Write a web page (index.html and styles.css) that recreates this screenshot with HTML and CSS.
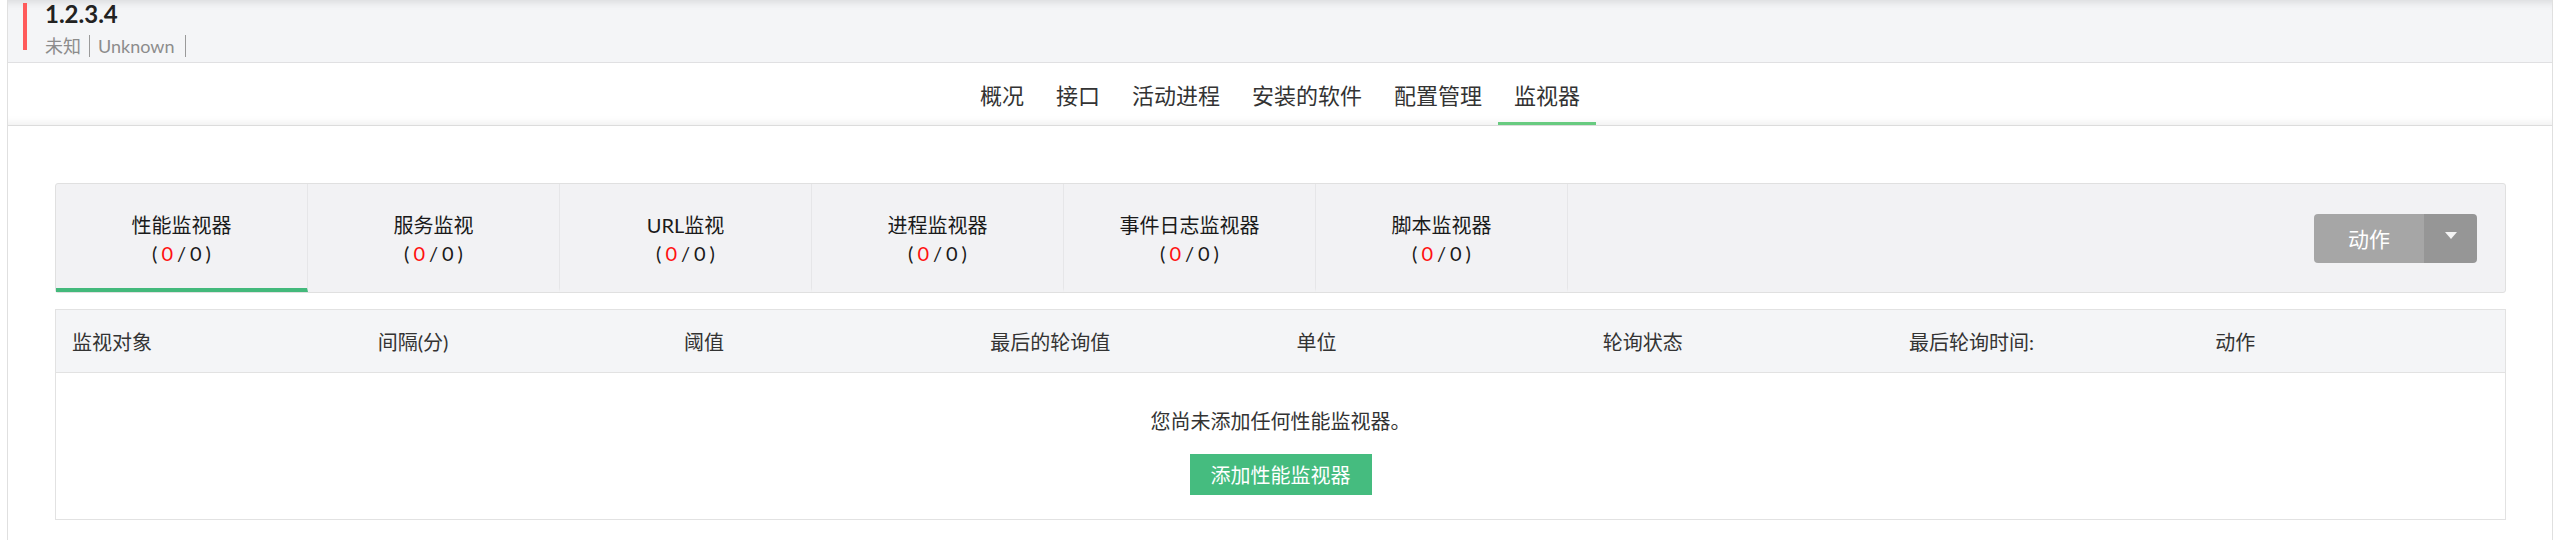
FILE: index.html
```html
<!DOCTYPE html>
<html lang="zh-CN">
<head>
    <meta charset="UTF-8">
    <title>监视器</title>
    <link rel="stylesheet" href="styles.css">
</head>
<body>

    <div class="page">
        <!-- 主机信息 -->
        <div class="host-head">
            <div class="host-mark"></div>
            <div class="host-info">
                <div class="host-name">1.2.3.4</div>
                <div class="host-meta"><span class="meta-item">未知</span><span class="meta-item">Unknown</span></div>
            </div>
        </div>

        <!-- 主导航 -->
        <nav class="main-nav">
            <a class="nav-item">概况</a>
            <a class="nav-item">接口</a>
            <a class="nav-item">活动进程</a>
            <a class="nav-item">安装的软件</a>
            <a class="nav-item">配置管理</a>
            <a class="nav-item active">监视器</a>
        </nav>

        <div class="content">
            <!-- 监视器类型 -->
            <div class="monitor-tabs">
                <div class="mtab active">
                    <div class="mtab-name">性能监视器</div>
                    <div class="mtab-count">(<span class="down">0</span>/0)</div>
                </div>
                <div class="mtab">
                    <div class="mtab-name">服务监视</div>
                    <div class="mtab-count">(<span class="down">0</span>/0)</div>
                </div>
                <div class="mtab">
                    <div class="mtab-name">URL监视</div>
                    <div class="mtab-count">(<span class="down">0</span>/0)</div>
                </div>
                <div class="mtab">
                    <div class="mtab-name">进程监视器</div>
                    <div class="mtab-count">(<span class="down">0</span>/0)</div>
                </div>
                <div class="mtab">
                    <div class="mtab-name">事件日志监视器</div>
                    <div class="mtab-count">(<span class="down">0</span>/0)</div>
                </div>
                <div class="mtab">
                    <div class="mtab-name">脚本监视器</div>
                    <div class="mtab-count">(<span class="down">0</span>/0)</div>
                </div>

                <div class="tab-actions">
                    <div class="btn-group">
                        <button type="button" class="btn-action">动作</button>
                        <button type="button" class="btn-caret"><span class="caret"></span></button>
                    </div>
                </div>
            </div>

            <!-- 监视器列表 -->
            <table class="monitor-table">
                <thead>
                    <tr>
                        <th>监视对象</th>
                        <th>间隔(分)</th>
                        <th>阈值</th>
                        <th>最后的轮询值</th>
                        <th>单位</th>
                        <th>轮询状态</th>
                        <th>最后轮询时间:</th>
                        <th>动作</th>
                    </tr>
                </thead>
                <tbody>
                    <tr>
                        <td colspan="8" class="empty">
                            <div class="empty-text">您尚未添加任何性能监视器。</div>
                            <button type="button" class="btn-add">添加性能监视器</button>
                        </td>
                    </tr>
                </tbody>
            </table>
        </div>
    </div>

</body>
</html>
```

FILE: styles.css
```css
/* 基本のスタイル */
body {
    margin: 0;
    font-family: Lato, "Noto Sans CJK SC", sans-serif;
    color: #333;
    background-color: #fff;
}

.page {
    margin: 0 5px 0 7px;
    border-left: 1px solid #e0e0e0;
    border-right: 1px solid #e0e0e0;
    min-height: 540px;
}

/* 主机信息 */
.host-head {
    display: flex;
    height: 62px;
    padding-left: 15px;
    background-color: #f4f5f7;
    border-bottom: 1px solid #e0e0e2;
    box-shadow: inset 0 10px 8px -8px rgba(0, 0, 0, 0.12);
}

.host-mark {
    width: 4px;
    height: 47px;
    margin-top: 3px;
    background-color: #ff5b5b;
}

.host-info {
    margin-left: 18px;
    padding-top: 1px;
}

.host-name {
    font-size: 24px;
    line-height: 26px;
    font-weight: bold;
    color: #222;
}

.host-meta {
    margin-top: 7px;
    font-size: 18px;
    line-height: 24px;
    color: #8c8c8c;
}

.meta-item {
    padding-right: 8px;
    border-right: 1px solid #9a9a9a;
}

.meta-item + .meta-item {
    padding-left: 8px;
    padding-right: 11px;
}

/* 主导航 */
.main-nav {
    display: flex;
    justify-content: center;
    height: 62px;
    background-color: #fff;
    border-bottom: 1px solid #dcdcdc;
    box-shadow: inset 0 -10px 8px -8px rgba(0, 0, 0, 0.07);
}

.nav-item {
    padding: 7px 16px 0;
    line-height: 52px;
    font-size: 22px;
    color: #333;
    border-bottom: 3px solid transparent;
    cursor: pointer;
}

.nav-item.active {
    border-bottom-color: #68cb80;
}

.content {
    padding: 57px 46px 20px 47px;
}

/* 监视器类型 */
.monitor-tabs {
    display: flex;
    height: 108px;
    background-color: #f2f2f4;
    border: 1px solid #e0e0e0;
    border-radius: 3px;
}

.mtab {
    width: 252px;
    box-sizing: border-box;
    display: flex;
    flex-direction: column;
    justify-content: center;
    align-items: center;
    padding-top: 6px;
    border-right: 1px solid #e6e6e8;
    border-bottom: 4px solid transparent;
    font-size: 20px;
    line-height: 28px;
    color: #1a1a1a;
}

.mtab.active {
    border-bottom-color: #43b97b;
}

.mtab-count {
    letter-spacing: 4px;
    padding-left: 4px;
}

.down {
    color: #ff1010;
}

.tab-actions {
    margin-left: auto;
    padding-right: 28px;
    display: flex;
    align-items: center;
}

.btn-group {
    display: flex;
    height: 49px;
    border-radius: 4px;
    overflow: hidden;
}

.btn-group button {
    border: none;
    margin: 0;
    color: #fff;
    font-family: Lato, "Noto Sans CJK SC", sans-serif;
    cursor: pointer;
}

.btn-action {
    width: 110px;
    font-size: 21px;
    background-color: #a6a6a6;
}

.btn-caret {
    width: 53px;
    background-color: #969696;
    display: flex;
    align-items: center;
    justify-content: center;
    padding: 0 0 5px;
}

.caret {
    width: 0;
    height: 0;
    border-left: 6px solid transparent;
    border-right: 6px solid transparent;
    border-top: 7px solid #f4f4f4;
}

/* 监视器列表 */
.monitor-table {
    width: 100%;
    margin-top: 16px;
    border-collapse: collapse;
    table-layout: fixed;
    border: 1px solid #e2e2e2;
}

.monitor-table th {
    height: 62px;
    padding: 0 0 0 16px;
    text-align: left;
    font-size: 20px;
    font-weight: normal;
    color: #333;
    background-color: #f4f5f7;
    border-bottom: 1px solid #e2e2e2;
}

.empty {
    padding: 34px 0 24px;
    text-align: center;
}

.empty-text {
    font-size: 20px;
    line-height: 28px;
    color: #333;
}

.btn-add {
    margin-top: 19px;
    height: 41px;
    padding: 0 21px;
    border: none;
    font-family: Lato, "Noto Sans CJK SC", sans-serif;
    font-size: 20px;
    color: #fff;
    background-color: #45bc7f;
    cursor: pointer;
}
```
